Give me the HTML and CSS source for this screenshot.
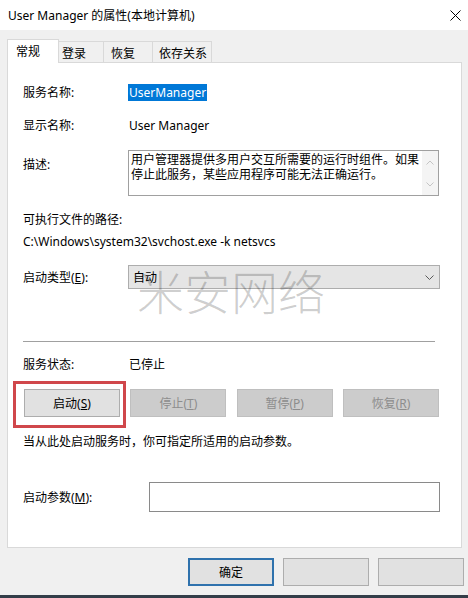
FILE: index.html
```html
<!DOCTYPE html>
<html lang="zh-CN">
<head>
<meta charset="utf-8">
<title>User Manager 的属性</title>
<link rel="stylesheet" href="styles.css">
</head>
<body>
<div class="window">
  <div class="titlebar">
    <span class="title">User Manager 的属性(本地计算机)</span>
    <svg class="close" width="11" height="11" viewBox="0 0 11 11"><path d="M0.5 0.5 L10.5 10.5 M10.5 0.5 L0.5 10.5" stroke="#000" stroke-width="1" fill="none"/></svg>
  </div>
  <div class="tabs">
    <div class="tab tab-active tab-general">常规</div>
    <div class="tab tab-logon">登录</div>
    <div class="tab tab-recovery">恢复</div>
    <div class="tab tab-deps">依存关系</div>
  </div>
  <div class="panel">
    <div class="watermark">米安网络</div>
    <div class="row row-first">
      <span class="label">服务名称:</span>
      <span class="value selected">UserManager</span>
    </div>
    <div class="row row-gap">
      <span class="label">显示名称:</span>
      <span class="value">User Manager</span>
    </div>
    <div class="row row-gap row-top">
      <span class="label label-desc">描述:</span>
      <div class="descbox">
        <div class="desctext">用户管理器提供多用户交互所需要的运行时组件。如果<br>停止此服务，某些应用程序可能无法正确运行。</div>
        <div class="scrollbar">
          <svg width="8" height="5" viewBox="0 0 8 5"><path d="M0.5 4.5 L4 1 L7.5 4.5" stroke="#c4c4c4" fill="none"/></svg>
          <svg width="8" height="5" viewBox="0 0 8 5"><path d="M0.5 0.5 L4 4 L7.5 0.5" stroke="#c4c4c4" fill="none"/></svg>
        </div>
      </div>
    </div>
    <div class="pathlabel">可执行文件的路径:</div>
    <div class="pathvalue">C:\Windows\system32\svchost.exe -k netsvcs</div>
    <div class="row row-combo">
      <span class="label">启动类型(<u>E</u>):</span>
      <div class="combo">
        <span>自动</span>
        <svg width="9" height="5" viewBox="0 0 9 5"><path d="M0.5 0.5 L4.5 4.5 L8.5 0.5" stroke="#5a5a5a" fill="none"/></svg>
      </div>
    </div>
    <div class="separator"></div>
    <div class="row row-status">
      <span class="label">服务状态:</span>
      <span class="value">已停止</span>
    </div>
    <div class="buttons">
      <div class="btn btn-start">启动(<u>S</u>)</div>
      <div class="btn btn-disabled">停止(<u>T</u>)</div>
      <div class="btn btn-disabled">暂停(<u>P</u>)</div>
      <div class="btn btn-disabled">恢复(<u>R</u>)</div>
    </div>
    <div class="hint">当从此处启动服务时，你可指定所适用的启动参数。</div>
    <div class="row row-params">
      <span class="label label-params">启动参数(<u>M</u>):</span>
      <div class="input"></div>
    </div>
  </div>
  <div class="footer">
    <div class="fbtn fbtn-default">确定</div>
    <div class="fbtn"></div>
    <div class="fbtn"></div>
  </div>
  <div class="taskbar"></div>
</div>
</body>
</html>
```

FILE: styles.css
```css
* { box-sizing: border-box; }
html, body {
  margin: 0;
  padding: 0;
  background: #f0f0f0;
  width: 468px;
  height: 598px;
  overflow: hidden;
}
body {
  font-family: "Noto Sans", "Noto Sans CJK SC", sans-serif;
  font-size: 12px;
  line-height: 17px;
  color: #000;
}
u { text-decoration: underline; text-underline-offset: 1px; }

.titlebar {
  height: 30px;
  background: #fff;
  display: flex;
  align-items: center;
  justify-content: space-between;
  padding: 0 7px 0 8px;
}
.title { font-size: 12px; }
.close { display: block; }

.tabs {
  height: 32px;
  padding: 9px 0 0 7px;
  display: flex;
  align-items: flex-end;
}
.tab {
  height: 21px;
  border: 1px solid #d9d9d9;
  border-bottom: none;
  background: #f0f0f0;
  padding-top: 3px;
  margin-left: -1px;
  white-space: nowrap;
}
.tab-active {
  position: relative;
  z-index: 1;
  height: 24px;
  margin-bottom: -1px;
  margin-left: 0;
  background: #fff;
  padding-top: 3px;
}
.tab-general { width: 52px; padding-left: 8px; }
.tab-logon { width: 46px; padding-left: 3px; }
.tab-recovery { width: 50px; padding-left: 7px; }
.tab-deps { width: 60px; padding-left: 6px; }

.panel {
  position: relative;
  margin-left: 7px;
  width: 455px;
  background: #fff;
  border: 1px solid #d9d9d9;
  padding: 21px 0 35px 15px;
}
.watermark {
  position: absolute;
  left: 129px;
  top: 203px;
  font-family: "Noto Sans CJK SC", sans-serif;
  font-size: 47px;
  line-height: 47px;
  font-weight: 300;
  color: rgba(0, 0, 0, 0.2);
  white-space: nowrap;
  pointer-events: none;
  z-index: 2;
}

.row { display: flex; align-items: center; }
.row-gap { margin-top: 16px; }
.row-top { align-items: flex-start; }
.label { width: 105px; flex: none; }
.label-desc { padding-top: 6px; }
.value { padding-left: 1px; height: 17px; }
.selected {
  background: #0078d7;
  color: #fff;
  padding: 0 1px 0 1px;
}

.descbox {
  width: 311px;
  height: 46px;
  border: 1px solid #a0a0a0;
  display: flex;
  overflow: hidden;
}
.desctext {
  flex: 1;
  min-width: 0;
  overflow: hidden;
  padding: 1px 0 0 2px;
  line-height: 15px;
  white-space: nowrap;
}
.scrollbar {
  width: 16px;
  flex: none;
  background: #f4f4f4;
  display: flex;
  flex-direction: column;
  align-items: center;
  justify-content: space-between;
  padding: 9px 0 8px;
}
.scrollbar svg { display: block; }

.pathlabel { margin-top: 15px; }
.pathvalue { margin-top: 5px; }

.row-combo { margin-top: 15px; }
.combo {
  width: 312px;
  height: 24px;
  background: #e5e5e5;
  border: 1px solid #adadad;
  display: flex;
  align-items: center;
  justify-content: space-between;
  padding: 0 5px 0 4px;
}
.combo svg { display: block; }

.separator {
  margin-top: 52px;
  width: 412px;
  height: 1px;
  background: #a0a0a0;
}
.row-status { margin-top: 14px; }

.buttons {
  margin-top: 16px;
  margin-left: 1px;
  width: 415px;
  display: flex;
  justify-content: space-between;
}
.btn {
  width: 96px;
  height: 28px;
  display: flex;
  align-items: center;
  justify-content: center;
  border: 1px solid #adadad;
  background: #e1e1e1;
}
.btn-start { position: relative; }
.btn-start::after {
  content: "";
  position: absolute;
  left: -12px;
  top: -9px;
  right: -7px;
  bottom: -12px;
  border: 3px solid #d0474b;
}
.btn-disabled {
  background: #cccccc;
  border-color: #bfbfbf;
  color: #8d8d8d;
}

.hint { margin-top: 16px; }

.row-params { margin-top: 32px; }
.label-params { width: 126px; }
.input {
  width: 291px;
  height: 30px;
  border: 1px solid #8a8a8a;
  background: #fff;
}

.footer {
  margin-top: 10px;
  display: flex;
  justify-content: flex-end;
  gap: 9px;
  padding-right: 4px;
}
.fbtn {
  width: 86px;
  height: 28px;
  border: 1px solid #adadad;
  background: #e1e1e1;
  display: flex;
  align-items: center;
  justify-content: center;
}
.fbtn-default {
  border: 2px solid #2f72ad;
}
.taskbar {
  margin-top: 9px;
  height: 10px;
  background: #333d48;
}
```
